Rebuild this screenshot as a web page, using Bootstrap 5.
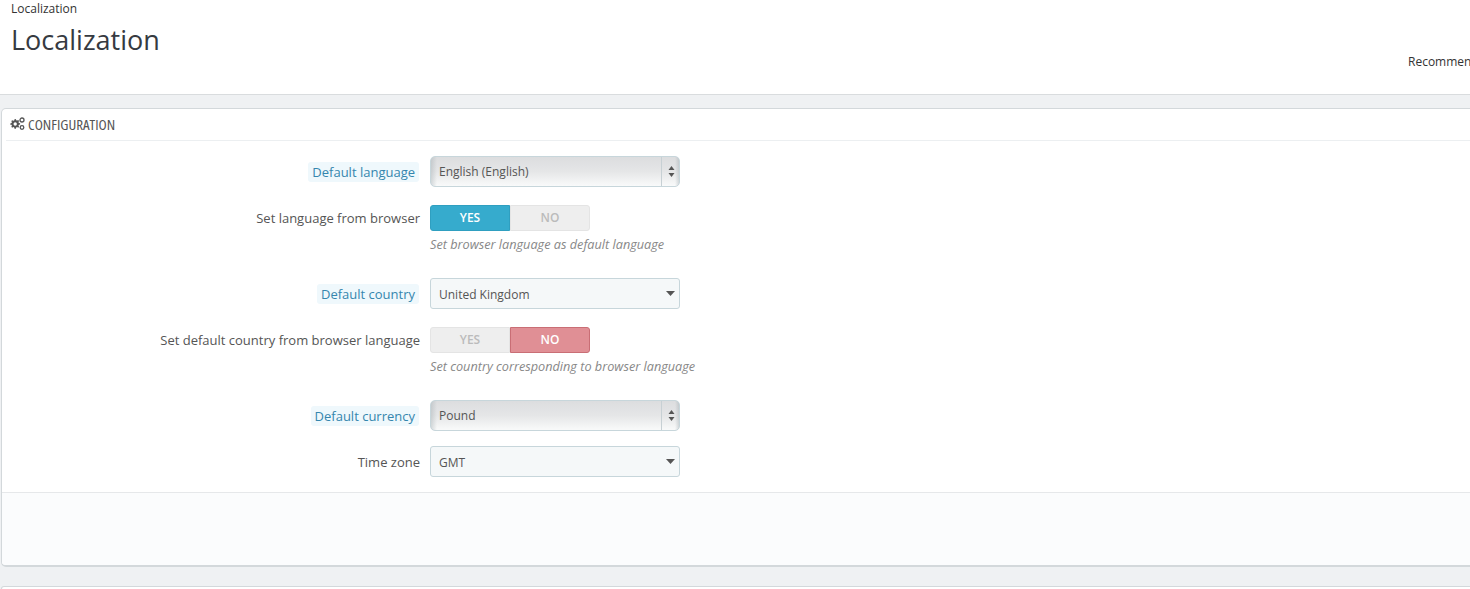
<!DOCTYPE html>
<html lang="en"><head><meta charset="utf-8"><title>Localization</title>
<link href="https://cdn.jsdelivr.net/npm/bootstrap@5.3.0/dist/css/bootstrap.min.css" rel="stylesheet">
<style>
html,body{height:589px;overflow:hidden}
body{background:#eff1f3;font-family:"Open Sans",sans-serif;font-size:12.5px;color:#555}
.top-head{background:#fff;height:95px;border-bottom:1px solid #d9dcde;position:relative}
.crumb{padding:1px 0 0 11px;font-size:12px;line-height:16px;color:#333}
.page-title{font-family:"Open Sans",sans-serif;font-size:27px;line-height:36px;font-weight:400;color:#363a41;margin:5px 0 0 11px}
.rec-link{padding-left:1408px;margin-top:-4px;white-space:nowrap;font-size:12px;line-height:16px;color:#333}
.panel-box{margin:13px -20px 0 1px;height:459px;background:#fff;border:1px solid #d3d8db;border-bottom-width:2px;border-radius:5px;overflow:hidden}
.panel-head{margin-left:4px;height:32px;padding-left:4px;padding-bottom:2px;border-bottom:1px solid #eceff1;font-family:"Open Sans",sans-serif;font-stretch:75%;font-weight:500;font-size:15px;line-height:30px;color:#555;gap:3px}
.panel-title{white-space:nowrap}
.panel-body{height:351px;padding-top:15px}
.form-line{height:31px}
.lab{width:418px;flex:none;text-align:right;line-height:16px;color:#555;font-size:13px}
.lab-hint{background:#eff8fc;color:#3586ae;padding:1px 4px;border-radius:3px;margin-right:1px}
.ctl{width:250px;margin-left:10px;flex:none;position:relative}
.sel{display:block;width:250px;height:31px;appearance:none;border:1px solid #c7d6db;border-radius:3px;padding:2px 8px 0;font-family:"Open Sans",sans-serif;font-size:12px;color:#555;background:#f5f8f9}
.sel-uni{padding-top:0;background:linear-gradient(90deg,rgba(160,170,175,.4),transparent 6px,transparent 244px,rgba(160,170,175,.4)),linear-gradient(180deg,#dcdddf,#e5e6e7 50%,#f9fafa);border-radius:5px}
.sel-div{position:absolute;top:1px;bottom:1px;right:18px;width:1px;background:#c7d0d4}
.sel-ico{position:absolute;pointer-events:none}
.toggle-pair{width:160px;height:26px;display:flex;font-weight:600;font-size:12px;line-height:24px;text-align:center}
.tg{width:80px;border:1px solid #e4e4e4;background:#eee;color:#bbb}
.tg:first-child{border-radius:3px 0 0 3px}
.tg:last-child{border-radius:0 3px 3px 0}
.tg-yes{background:#36abcd;border-color:#2f9fc0;color:#fff}
.tg-no{background:#e08f95;border-color:#c96e75;color:#fff}
.help-txt{font-style:italic;font-size:12.7px;line-height:16px;color:#888;margin:5px 0 0 428px}
.panel-foot{height:75px;background:#fbfcfd;border-top:1px solid #e6e8ea}
.panel-next{margin:19px -20px 0 1px;height:3px;background:#fff;border:1px solid #d3d8db;border-bottom:0;border-radius:5px 5px 0 0}
.sp-18{margin-top:18px}.sp-26{margin-top:26px}.sp-15{margin-top:15px}.h-26{height:26px}
</style></head>
<body>
<div class="top-head">
  <div class="crumb">Localization</div>
  <h1 class="page-title">Localization</h1>
  <div class="rec-link">Recommended Modules</div>
</div>
<div class="panel-box">
  <div class="panel-head d-flex align-items-center">
    <svg width="15" height="13" viewBox="0 0 15 13" fill="#555" aria-hidden="true"><path d="M5 2.2l.9-.2.3 1.2.9.4 1.1-.6.9.9-.6 1.1.4.9 1.2.3v1.3l-1.2.3-.4.9.6 1.1-.9.9-1.1-.6-.9.4-.3 1.2H4.500l-.3-1.200-.9-.4-1.100.6-.9-.9.6-1.100-.4-.9L.3 7.700V6.400l1.200-.3.4-.9-.6-1.100.9-.9 1.100.6.900-.4.3-1.200zM5.200 5.300a1.700 1.700 0 1 0 0 3.400 1.700 1.700 0 0 0 0-3.400z"/><circle cx="12" cy="3" r="2" fill="none" stroke="#555" stroke-width="1.300"/><circle cx="12" cy="10.500" r="1.800" fill="none" stroke="#555" stroke-width="1.300"/></svg>
    <span class="panel-title">CONFIGURATION</span>
  </div>
  <div class="panel-body">
    <div class="form-line d-flex align-items-center">
      <div class="lab"><span class="lab-hint">Default language</span></div>
      <div class="ctl"><select class="sel sel-uni"><option>English (English)</option></select><i class="sel-div"></i>
        <svg class="sel-ico" style="right:5px;top:10px" width="7" height="11" viewBox="0 0 7 11" fill="#555"><path d="M3.500 0L6.500 4H.5zM3.500 11L.5 7h6z"/></svg></div>
    </div>
    <div class="form-line d-flex align-items-center sp-18 h-26">
      <div class="lab">Set language from browser</div>
      <div class="ctl"><div class="toggle-pair"><span class="tg tg-yes">YES</span><span class="tg">NO</span></div></div>
    </div>
    <div class="help-txt">Set browser language as default language</div>
    <div class="form-line d-flex align-items-center sp-26">
      <div class="lab"><span class="lab-hint">Default country</span></div>
      <div class="ctl"><select class="sel"><option>United Kingdom</option></select>
        <svg class="sel-ico" style="right:5px;top:13px" width="9" height="5" viewBox="0 0 9 5" fill="#555"><path d="M0 0h9L4.500 5z"/></svg></div>
    </div>
    <div class="form-line d-flex align-items-center sp-18 h-26">
      <div class="lab">Set default country from browser language</div>
      <div class="ctl"><div class="toggle-pair"><span class="tg">YES</span><span class="tg tg-no">NO</span></div></div>
    </div>
    <div class="help-txt">Set country corresponding to browser language</div>
    <div class="form-line d-flex align-items-center sp-26">
      <div class="lab"><span class="lab-hint">Default currency</span></div>
      <div class="ctl"><select class="sel sel-uni"><option>Pound</option></select><i class="sel-div"></i>
        <svg class="sel-ico" style="right:5px;top:10px" width="7" height="11" viewBox="0 0 7 11" fill="#555"><path d="M3.500 0L6.500 4H.5zM3.500 11L.5 7h6z"/></svg></div>
    </div>
    <div class="form-line d-flex align-items-center sp-15">
      <div class="lab">Time zone</div>
      <div class="ctl"><select class="sel"><option>GMT</option></select>
        <svg class="sel-ico" style="right:5px;top:13px" width="9" height="5" viewBox="0 0 9 5" fill="#555"><path d="M0 0h9L4.500 5z"/></svg></div>
    </div>
  </div>
  <div class="panel-foot"></div>
</div>
<div class="panel-next"></div>
<script src="https://cdn.jsdelivr.net/npm/bootstrap@5.3.0/dist/js/bootstrap.bundle.min.js"></script>
</body></html>
